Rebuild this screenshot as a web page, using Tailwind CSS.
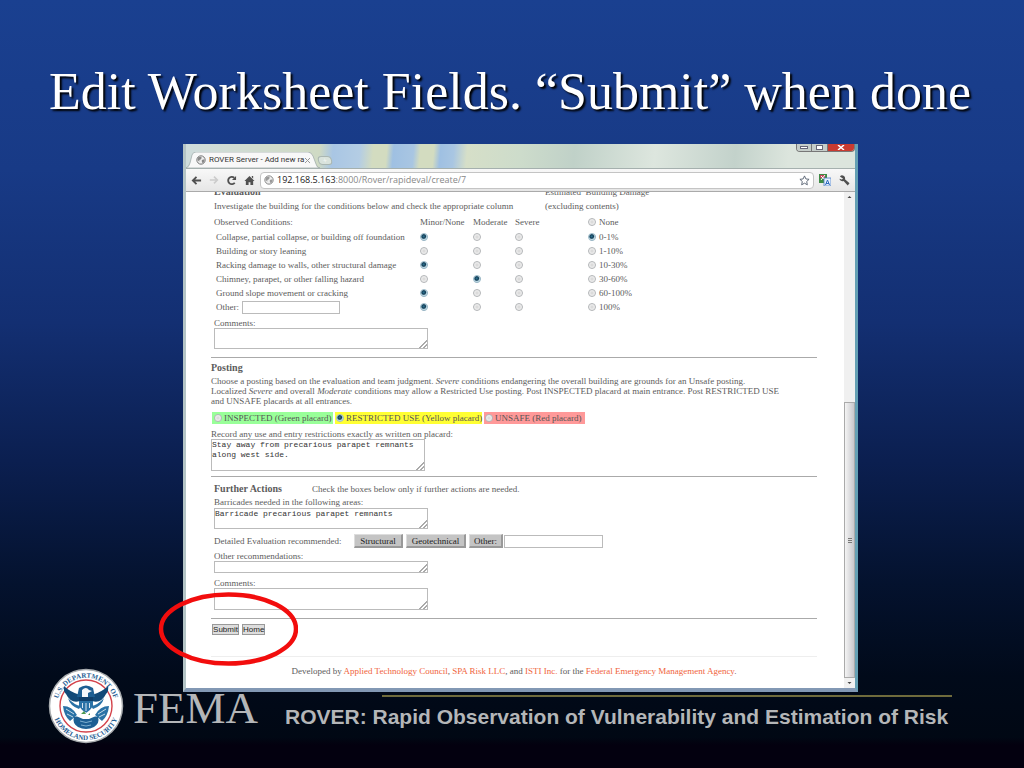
<!DOCTYPE html>
<html lang="en">
<head>
<meta charset="utf-8">
<meta name="viewport" content="width=device-width, initial-scale=1">
<title>Edit Worksheet Fields</title>
<script src="https://cdn.jsdelivr.net/npm/@tailwindcss/browser@4"></script>
<style>
  input[type=radio]{appearance:none;width:8px;height:8px;border-radius:50%;border:1px solid #b3b6b8;background:radial-gradient(circle,#d4d4d4 0,#f4f4f4 75%);flex:none;display:block}
  input[type=radio]:checked{border-color:#9fbccb;background:radial-gradient(circle at 45% 40%,#2d7594 0,#123c55 38%,#bfdbe6 62%)}
  textarea{display:block;resize:vertical}
  textarea::-webkit-resizer{background:linear-gradient(135deg,transparent 72%,#aaa 72%,#aaa 78%,transparent 78%,transparent 86%,#aaa 86%,#aaa 92%,transparent 92%)}
</style>
</head>
<body class="min-h-screen overflow-x-hidden bg-[linear-gradient(180deg,#1a4090_0%,#183a86_22%,#132f72_42%,#0b1f50_60%,#04122e_76%,#010a1a_88%,#010814_96%,#03000f_97%)] font-['Liberation_Serif',serif]">
<header class="flex h-[144px] items-center justify-center pr-1 pt-10">
  <h1 class="whitespace-nowrap text-[52px] leading-[56px] text-white [text-shadow:2px_2px_2px_#000]">Edit Worksheet Fields. “Submit” when done</h1>
</header>

<main class="relative z-10 ml-[183px] mr-[166px] border-x-[3px] border-b-4 border-l-[#b4c4c6] border-r-[#64a0b4] border-b-[#8298b4] bg-white text-[9px] leading-3 text-[#5c5c5c]">
  <!-- tab strip -->
  <div class="flex h-6 items-end bg-[linear-gradient(95deg,#cfdcdc_0%,#cfdac4_20%,#a9c6e4_22%,#b4cde4_26%,#d3dcc0_28%,#d3dcc0_30%,#9fc0e2_31%,#a9c6e2_34%,#d3dcc0_35%,#d3dcc0_37%,#9fc0e2_38%,#a9c6e2_40%,#d6dfc8_42%,#cddccb_50%,#c0d1c8_58%,#dde6de_70%,#c3d2cb_82%,#dce5dd_90%)]">
    <div class="relative h-4 w-[134px]">
      <svg class="absolute inset-0 h-4 w-full" viewBox="0 0 134 16" preserveAspectRatio="none" aria-hidden="true"><path d="M0 16Q3 15 4 11L6 3Q7 0 10 0H122Q125 0 127 4L130 12Q131 16 134 16Z" fill="#f8f8f8" stroke="#9aa5a5" stroke-width=".7"/></svg>
      <div class="relative flex h-4 items-center pl-[10px] font-['Roboto',sans-serif] text-[8px] text-[#333]">
        <svg class="mr-[3px] size-[10px] shrink-0" viewBox="0 0 12 12" aria-hidden="true"><circle cx="6" cy="6" r="5" fill="#eee" stroke="#777" stroke-width="1.2"/><path d="M2 3l3-1 2 1-1 2-2 1v2L2 6zM7 6l3-1v3L8 10 7 8z" fill="#888"/></svg>
        <span class="w-[96px] overflow-hidden whitespace-nowrap">ROVER Server - Add new ra</span>
        <button class="text-[9px] text-[#999]" aria-label="Close tab"><svg class="size-[5px]" viewBox="0 0 5 5" stroke="#999"><path d="M0 0l5 5M5 0L0 5"/></svg></button>
      </div>
    </div>
    <button class="mb-[3px] ml-[-2px] h-[9px] w-[14px] skew-x-12 rounded-sm border border-[#aab7b2] bg-[#d9e3dc] text-[8px] leading-[6px] text-white" aria-label="New tab">+</button>
    <div class="mb-4 ml-auto flex h-2 w-[59px] overflow-hidden rounded-b-sm border border-t-0 border-[#777]">
      <button class="flex flex-1 items-center justify-center border-r border-[#777] bg-[#c5cdc9]" aria-label="Minimize"><span class="h-[3px] w-2 border border-[#667] bg-white"></span></button>
      <button class="flex w-4 items-center justify-center border-r border-[#777] bg-[#c5cdc9]" aria-label="Maximize"><span class="h-[5px] w-[7px] border border-[#667] bg-white"></span></button>
      <button class="flex w-[26px] items-center justify-center bg-[#c93b30]" aria-label="Close"><svg class="h-[5px] w-2" viewBox="0 0 8 5" fill="none" stroke="#fff" stroke-width="1.500"><path d="M1 0l6 5M7 0L1 5"/></svg></button>
    </div>
  </div>
  <!-- toolbar -->
  <div class="flex h-6 items-center border-y border-t-[#a5b0ae] border-b-[#aaa] bg-gradient-to-b from-[#f8f8f8] to-[#e6e6e6] pl-[5px] pr-[5px] text-[#505050]">
    <button aria-label="Back"><svg class="size-[11px]" viewBox="0 0 12 12" fill="none" stroke="currentColor" stroke-width="2"><path d="M6 2L2 6l4 4M2 6h9"/></svg></button>
    <button class="ml-[7px] text-[#ccc]" aria-label="Forward"><svg class="size-[10px]" viewBox="0 0 12 12" fill="none" stroke="currentColor" stroke-width="2"><path d="M6 2l4 4-4 4M10 6H1"/></svg></button>
    <button class="ml-[7px]" aria-label="Reload"><svg class="size-[11px]" viewBox="0 0 12 12" fill="none" stroke="currentColor" stroke-width="2"><path d="M9.500 8.500A4 4 0 1 1 9 3"/><path d="M11 1v4.500H6.500z" fill="currentColor" stroke="none"/></svg></button>
    <button class="ml-[7px]" aria-label="Home page"><svg class="size-[11px]" viewBox="0 0 12 12" fill="currentColor"><path d="M6 1l5.500 5.500H10V11H7V8H5v3H2V6.500H.5zM8.500 1H10v3L8.500 2.500z"/></svg></button>
    <div class="ml-[5px] flex h-[17px] flex-1 items-center rounded-sm border border-[#c4c4c4] bg-white px-[3px]">
      <svg class="mr-[3px] size-[10px] shrink-0" viewBox="0 0 12 12" aria-hidden="true"><circle cx="6" cy="6" r="5" fill="#eee" stroke="#888" stroke-width="1.200"/><path d="M2 3l3-1 2 1-1 2-2 1v2L2 6zM7 6l3-1v3L8 10 7 8z" fill="#999"/></svg>
      <p class="flex-1 whitespace-nowrap font-['Open_Sans',sans-serif] text-[9px] text-[#888]"><span class="text-[#222]">192.168.5.163</span>:8000/Rover/rapideval/create/7</p>
      <button aria-label="Bookmark"><svg class="size-[11px]" viewBox="0 0 12 12" fill="#fff" stroke="#556070" stroke-width="1"><path d="M6 1l1.500 3.300 3.500.4-2.600 2.400.7 3.600L6 8.900l-3.100 1.800.7-3.600L1 4.700l3.500-.4z"/></svg></button>
    </div>
    <button class="ml-[5px]" aria-label="Translate"><svg class="size-3" viewBox="0 0 12 12"><path d="M0 0h8v9H0z" fill="#3f8b45"/><path d="M1 1h5v3H1z" fill="#c0485c"/><path d="M2 2l4 4M6 1L2 6" stroke="#fff"/><path d="M5 4h7v8H5z" fill="#e8f1fc" stroke="#4c7fc6" stroke-width=".8"/><path d="M6.500 11l2-5 2 5M7 9.500h3" fill="none" stroke="#2f6bc0"/></svg></button>
    <button class="ml-[8px]" aria-label="Settings"><svg class="size-[11px]" viewBox="0 0 12 12"><path d="M1 1.500A3.200 3.200 0 0 1 6.500 4.500L11.500 9 9.500 11.500 5 6.500A3.200 3.200 0 0 1 .5 4L3 5l1.500-1z" fill="#505050"/></svg></button>
  </div>

  <div class="flex">
    <form class="min-w-0 flex-1 overflow-hidden pl-[25px] pr-[27px]" onsubmit="return false">
      <!-- evaluation -->
      <section class="pl-[3px]">
        <table class="w-full table-fixed border-collapse whitespace-nowrap text-left [&_td]:p-0 [&_th]:p-0 [&_th]:font-normal">
          <colgroup><col class="w-[206px]"><col class="w-[53px]"><col class="w-[42px]"><col class="w-[30px]"><col></colgroup>
          <thead>
            <tr class="h-[6px]"><th colspan="4"><div class="flex h-[6px] items-end overflow-hidden text-[10px] font-bold">Evaluation</div></th><th><div class="flex h-[6px] items-end overflow-hidden">Estimated&nbsp; Building Damage</div></th></tr>
            <tr class="h-[15px]"><th colspan="4">Investigate the building for the conditions below and check the appropriate column</th><th>(excluding contents)</th></tr>
            <tr class="h-[17px]"><th>Observed Conditions:</th><th>Minor/None</th><th>Moderate</th><th>Severe</th><td><label class="flex items-center gap-[3px] pl-[43px]"><input type="radio" name="dmg">None</label></td></tr>
          </thead>
          <tbody class="[&_td:first-child]:pl-[2px] [&_tr]:h-[14px]">
            <tr><td>Collapse, partial collapse, or building off foundation</td><td><input type="radio" name="r1" checked aria-label="Collapse: minor"></td><td><input type="radio" name="r1" aria-label="Collapse: moderate"></td><td><input type="radio" name="r1" aria-label="Collapse: severe"></td><td><label class="flex items-center gap-[3px] pl-[43px]"><input type="radio" name="dmg" checked>0-1%</label></td></tr>
            <tr><td>Building or story leaning</td><td><input type="radio" name="r2" aria-label="Leaning: minor"></td><td><input type="radio" name="r2" aria-label="Leaning: moderate"></td><td><input type="radio" name="r2" aria-label="Leaning: severe"></td><td><label class="flex items-center gap-[3px] pl-[43px]"><input type="radio" name="dmg">1-10%</label></td></tr>
            <tr><td>Racking damage to walls, other structural damage</td><td><input type="radio" name="r3" checked aria-label="Racking: minor"></td><td><input type="radio" name="r3" aria-label="Racking: moderate"></td><td><input type="radio" name="r3" aria-label="Racking: severe"></td><td><label class="flex items-center gap-[3px] pl-[43px]"><input type="radio" name="dmg">10-30%</label></td></tr>
            <tr><td>Chimney, parapet, or other falling hazard</td><td><input type="radio" name="r4" aria-label="Falling hazard: minor"></td><td><input type="radio" name="r4" checked aria-label="Falling hazard: moderate"></td><td><input type="radio" name="r4" aria-label="Falling hazard: severe"></td><td><label class="flex items-center gap-[3px] pl-[43px]"><input type="radio" name="dmg">30-60%</label></td></tr>
            <tr><td>Ground slope movement or cracking</td><td><input type="radio" name="r5" checked aria-label="Ground: minor"></td><td><input type="radio" name="r5" aria-label="Ground: moderate"></td><td><input type="radio" name="r5" aria-label="Ground: severe"></td><td><label class="flex items-center gap-[3px] pl-[43px]"><input type="radio" name="dmg">60-100%</label></td></tr>
            <tr><td><label class="flex items-center"><span class="w-[26px]">Other:</span><input type="text" class="h-[13px] w-[98px] border border-[#bbb]"></label></td><td><input type="radio" name="r6" checked aria-label="Other: minor"></td><td><input type="radio" name="r6" aria-label="Other: moderate"></td><td><input type="radio" name="r6" aria-label="Other: severe"></td><td><label class="flex items-center gap-[3px] pl-[43px]"><input type="radio" name="dmg">100%</label></td></tr>
          </tbody>
        </table>
        <label for="c1" class="mt-1 block leading-[10px]">Comments:</label>
        <textarea id="c1" class="h-[21px] w-[214px] border border-[#bbb]"></textarea>
      </section>
      <hr class="mt-2 border-[#aaa]">
      <!-- posting -->
      <section>
        <h2 class="mt-1 text-[10px] font-bold">Posting</h2>
        <p class="mt-[2px] leading-[10px]">Choose a posting based on the evaluation and team judgment. <i>Severe</i> conditions endangering the overall building are grounds for an Unsafe posting.<br>Localized <i>Severe</i> and overall <i>Moderate</i> conditions may allow a Restricted Use posting. Post INSPECTED placard at main entrance. Post RESTRICTED USE<br>and UNSAFE placards at all entrances.</p>
        <div class="mt-[6px] flex gap-[2px] pl-px text-[#555]">
          <label class="flex h-3 w-[121px] items-center gap-[2px] whitespace-nowrap bg-[#99ff99] pl-[2px]"><input type="radio" name="post">INSPECTED (Green placard)</label>
          <label class="flex h-3 w-[147px] items-center gap-[2px] whitespace-nowrap bg-[#ffff33] pl-px"><input type="radio" name="post" checked>RESTRICTED USE (Yellow placard)</label>
          <label class="flex h-3 w-[101px] items-center gap-[2px] whitespace-nowrap bg-[#ff9999] pl-px"><input type="radio" name="post">UNSAFE (Red placard)</label>
        </div>
        <label for="c2" class="mt-[5px] block leading-[10px]">Record any use and entry restrictions exactly as written on placard:</label>
        <textarea id="c2" class="h-8 w-[214px] overflow-hidden border border-[#bbb] font-['Liberation_Mono',monospace] text-[8px] leading-[10px] text-[#333]">Stay away from precarious parapet remnants
along west side.</textarea>
      </section>
      <hr class="mt-[5px] border-[#aaa]">
      <!-- further actions -->
      <section class="pl-[3px]">
        <div class="mt-[6px] flex"><h2 class="w-[98px] text-[10px] font-bold">Further Actions</h2><p>Check the boxes below only if further actions are needed.</p></div>
        <label for="c3" class="mt-[2px] block leading-[11px]">Barricades needed in the following areas:</label>
        <textarea id="c3" class="h-[21px] w-[214px] overflow-hidden border border-[#bbb] font-['Liberation_Mono',monospace] text-[8px] leading-[10px] text-[#333]">Barricade precarious parapet remnants</textarea>
        <div class="mt-[5px] flex h-[14px] items-center whitespace-nowrap">
          <span class="w-[140px]">Detailed Evaluation recommended:</span>
          <button class="h-[14px] w-[49px] border border-b-2 border-r-2 border-[#ddd] border-b-[#999] border-r-[#999] bg-[#c4c4c4] leading-[10px] text-[#222]">Structural</button>
          <button class="ml-[3px] h-[14px] w-[60px] border border-b-2 border-r-2 border-[#ddd] border-b-[#999] border-r-[#999] bg-[#c4c4c4] leading-[10px] text-[#222]">Geotechnical</button>
          <button class="ml-[3px] h-[14px] w-[34px] border border-b-2 border-r-2 border-[#ddd] border-b-[#999] border-r-[#999] bg-[#c4c4c4] leading-[10px] text-[#222]">Other:</button>
          <input type="text" aria-label="Other evaluation" class="ml-px h-[13px] w-[99px] border border-[#bbb]">
        </div>
        <label for="c4" class="mt-[3px] block leading-[10px]">Other recommendations:</label>
        <textarea id="c4" class="h-3 w-[214px] border border-[#bbb]"></textarea>
        <label for="c5" class="mt-[5px] block leading-[10px]">Comments:</label>
        <textarea id="c5" class="h-[22px] w-[214px] border border-[#bbb]"></textarea>
      </section>
      <hr class="mt-2 border-[#aaa]">
      <div class="mt-[5px] flex gap-[3px] pl-px font-['Liberation_Sans',sans-serif] text-[8px] leading-[9px] text-[#222]">
        <button class="h-[11px] w-[27px] border border-[#999] bg-[#ddd]">Submit</button>
        <button class="h-[11px] w-[23px] border border-[#999] bg-[#ddd]">Home</button>
      </div>
      <p class="mt-[21px] h-8 whitespace-nowrap border-t border-[#eee] pt-2 text-center [&_a]:text-[#f0643c]">Developed by <a href="#">Applied Technology Council</a>, <a href="#">SPA Risk LLC</a>, and <a href="#">ISTI Inc.</a> for the <a href="#">Federal Emergency Management Agency</a>.</p>
    </form>
    <!-- scroll bar -->
    <div class="flex w-[11px] shrink-0 flex-col bg-[#f0f0f0]" aria-hidden="true">
      <svg class="h-[10px]" viewBox="0 0 10 10"><path d="M3 6h4L5 4z" fill="#444"/></svg>
      <div class="h-[200px]"></div>
      <div class="flex flex-1 items-center justify-center border border-[#aaa] bg-gradient-to-r from-[#f4f4f4] to-[#c8c8cc]"><span class="h-[5px] w-1 border-y border-[#777] bg-[linear-gradient(#ddd_1px,#777_1px,#777_2px,#ddd_2px)]"></span></div>
      <svg class="h-[10px]" viewBox="0 0 10 10"><path d="M3 4h4L5 6z" fill="#444"/></svg>
    </div>
  </div>
  <svg class="absolute bottom-[22px] left-[-28px] h-[74px] w-[140px]" viewBox="0 0 140 74" aria-hidden="true"><ellipse cx="70.500" cy="37" rx="67.500" ry="34.500" fill="none" stroke="#f20d0d" stroke-width="4.500"/></svg>
</main>

<footer class="-mt-6 flex pl-[48px] text-[#b4b6b8]">
  <svg class="size-[76px] shrink-0" viewBox="0 0 76 76" role="img" aria-label="U.S. Department of Homeland Security seal">
    <defs><path id="top" d="M14 55A29 29 0 1 1 62 55"/><path id="bot" d="M4 38A34 34 0 0 0 72 38"/></defs>
    <circle cx="38" cy="38" r="36.500" fill="#fff" stroke="#a7abae" stroke-width="1.500"/>
    <circle cx="38" cy="38" r="26" fill="#fff" stroke="#d3434b" stroke-width="1.400"/>
    <!-- wings -->
    <path d="M16 18q6 6 16 9v6q-9 3-14-7Q15 23 16 18zM60 18q-6 6-16 9v6q9 3 14-7 3-3 2-8z" fill="#124a78"/>
    <path d="M20 30q6 7 13 8l-2 3Q22 38 20 30zM56 30q-6 7-13 8l2 3q9-3 11-11z" fill="#2a72a6"/>
    <!-- head, shield and claws -->
    <path d="M31 20q7-5 14 0l2 9H29z" fill="#1d5f93"/>
    <path d="M34 22q4-4 7 0l3 1-4 2v4h-6z" fill="#f4f7fa"/>
    <path d="M31 29h14v9q-3 5-7 7-4-2-7-7z" fill="#2a72a6"/><path d="M31 29h14v4H31z" fill="#0f3f6a"/><path d="M34.500 35v5m3.500-5v8m3.500-8v5" stroke="#d5e3ee"/>
    <path d="M15 38q9 0 14 9l-7 6q-6-5-7-15zM61 38q-9 0-14 9l7 6q6-5 7-15z" fill="#2a72a6"/><path d="M18 41l8 5m-7 0l6 3M58 41l-8 5m7 0l-6 3" stroke="#c4dae8"/>
    <path d="M26 49q12-4 24 0 2 6-4 10-8 4-16 0-6-4-4-10z" fill="#1d5f93"/>
    <path d="M28 48l8-4 12 4-7 3h-6z" fill="#fff"/><path d="M33 46l3-3 2 3zM40 47l2-2v2z" fill="#4c9a50"/>
    <path d="M32 53q6 3 12 0M33 57q5 2 10 0" fill="none" stroke="#7fb0d0"/>
    <g font-family="Liberation Serif, serif" font-weight="bold" font-size="7" fill="#1f5d93" text-anchor="middle"><text><textPath href="#top" startOffset="50%">U.S. DEPARTMENT OF</textPath></text><text><textPath href="#bot" startOffset="50%">HOMELAND SECURITY</textPath></text></g>
  </svg>
  <span class="ml-[9px] mt-[15px] w-[124px] text-[45px] leading-[50px]">FEMA</span>
  <div class="mt-[27px] flex-1 pl-[28px]">
    <div class="ml-[97px] mr-[72px] h-[2px] bg-[#6f6b3c]"></div>
    <p class="mt-[5px] whitespace-nowrap font-['Liberation_Sans',sans-serif] text-[21px] font-bold leading-[30px]">ROVER: Rapid Observation of Vulnerability and Estimation of Risk</p>
  </div>
</footer>
</body>
</html>
